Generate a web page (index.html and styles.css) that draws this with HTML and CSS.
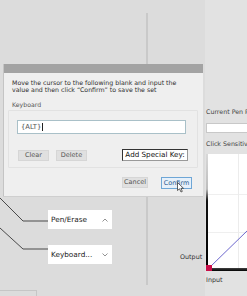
FILE: index.html
```html
<!DOCTYPE html>
<html>
<head>
<meta charset="utf-8">
<link rel="stylesheet" href="styles.css">
</head>
<body>
<div class="screen">
  <div class="canvas">
    <div class="divider"></div>
    <svg class="connectors" width="50" height="60" viewBox="0 0 50 60">
      <polyline points="0,2 23,25 48,25" />
      <polyline points="0,32 23,53 48,53" />
    </svg>
    <div class="select sel-pen"><span>Pen/Erase</span>
      <svg class="chev" width="6" height="4" viewBox="0 0 6 4"><polyline points="0.5,3.5 3,1 5.5,3.5"/></svg>
    </div>
    <div class="select sel-key"><span>Keyboard...</span>
      <svg class="chev" width="6" height="4" viewBox="0 0 6 4"><polyline points="0.5,0.5 3,3 5.5,0.5"/></svg>
    </div>
    <div class="tab-edge"></div>
    <span class="out-label">Output</span>
  </div>
  <aside class="panel">
    <div class="plabel">Current Pen P</div>
    <div class="pfield"></div>
    <div class="plabel">Click Sensitiv</div>
    <div class="graph">
      <div class="grid"></div>
      <svg class="curve" width="42" height="117" viewBox="0 0 42 117">
        <line x1="4" y1="113" x2="42" y2="76" />
      </svg>
      <div class="axis-y"></div>
      <div class="axis-x"></div>
      <div class="origin"></div>
    </div>
    <div class="in-label">Input</div>
  </aside>
</div>

<div class="dialog">
  <div class="titlebar"></div>
  <div class="dbody">
    <p class="msg">Move the cursor to the following blank and input the<br>value and then click “Confirm” to save the set</p>
    <div class="group-label">Keyboard</div>
    <div class="group">
      <div class="field"><span>{ALT}</span><i class="caret"></i></div>
      <div class="row">
        <button class="btn">Clear</button>
        <button class="btn">Delete</button>
        <div class="special">Add Special Key:</div>
      </div>
    </div>
    <div class="actions">
      <button class="btn act">Cancel</button>
      <button class="btn act primary">Confirm</button>
    </div>
  </div>
  <svg class="pointer" width="8" height="11" viewBox="0 0 8 11">
    <path d="M0.5,0.5 L0.5,8.5 L2.5,6.8 L4,10 L5.3,9.4 L3.9,6.3 L6.5,6.3 Z" />
  </svg>
</div>
</body>
</html>
```
FILE: styles.css
```css
* { box-sizing: border-box; }
html, body { margin: 0; padding: 0; }
body {
  width: 247px;
  height: 296px;
  overflow: hidden;
  background: #dcdcdc;
  font-family: "DejaVu Sans", Verdana, sans-serif;
  color: #333;
  position: relative;
}
.screen {
  display: flex;
  width: 247px;
  height: 296px;
}
.canvas {
  position: relative;
  width: 205px;
  flex: none;
}
.divider {
  position: absolute;
  left: 146px;
  top: 13px;
  width: 2px;
  height: 272px;
  background: #c9c9c9;
}
.connectors {
  position: absolute;
  left: 0;
  top: 196px;
}
.connectors polyline {
  fill: none;
  stroke: #4a4a4a;
  stroke-width: 1;
}
.select {
  position: absolute;
  left: 48px;
  width: 64px;
  height: 19px;
  background: #fff;
  display: flex;
  align-items: center;
  justify-content: space-between;
  padding: 0 4px 0 3px;
  font-size: 7.3px;
  color: #222;
}
.sel-pen { top: 210px; }
.sel-key { top: 245px; }
.chev polyline { fill: none; stroke: #777; stroke-width: 0.8; }
.tab-edge {
  position: absolute;
  left: 0;
  top: 290px;
  width: 37px;
  height: 8px;
  border-top: 1px solid #c6c6c6;
  border-right: 1px solid #c6c6c6;
}
.out-label {
  position: absolute;
  left: 180px;
  top: 253px;
  font-size: 6.4px;
  color: #333;
}
.panel {
  flex: 1;
  min-width: 0;
  background: #e2e2e2;
  padding-top: 107px;
  padding-left: 1px;
  display: flex;
  flex-direction: column;
  font-size: 6.3px;
  color: #444;
  white-space: nowrap;
}
.plabel { height: 9px; line-height: 9px; }
.pfield {
  height: 10px;
  margin: 7px 0 6px;
  background: #fff;
  border: 1px solid #c8c8c8;
  border-right: none;
  flex: none;
}
.graph {
  position: relative;
  margin-top: 6px;
  height: 117px;
  flex: none;
  background: #fff;
}
.grid {
  position: absolute;
  inset: 0;
  background-image:
    linear-gradient(to right, transparent 32px, #ececec 32px, #ececec 33px, transparent 33px),
    linear-gradient(to bottom, transparent 40px, #efefef 40px, #efefef 41px, transparent 41px, transparent 78px, #efefef 78px, #efefef 79px, transparent 79px);
}
.curve { position: absolute; left: 0; top: 0; }
.curve line { stroke: #5b55c8; stroke-width: 0.9; }
.axis-y {
  position: absolute;
  left: 0;
  top: 0;
  width: 2px;
  height: 117px;
  background: linear-gradient(to bottom, #d8d8d8 0%, #bdbdbd 30%, #111 40%, #000 100%);
}
.axis-x {
  position: absolute;
  left: 0;
  bottom: 0;
  width: 42px;
  height: 3px;
  background: linear-gradient(to bottom, #444, #000);
}
.origin {
  position: absolute;
  left: 0;
  bottom: 0;
  width: 6px;
  height: 6px;
  background: #c8104a;
}
.in-label {
  margin-top: 5px;
  font-size: 6.4px;
  color: #333;
}

/* dialog overlay */
.dialog {
  position: absolute;
  left: 3px;
  top: 64px;
  width: 200px;
  height: 132px;
  background: #efefef;
  border-left: 1px solid #c4c4c4;
  box-shadow: 0 1px 0 #cfcfcf;
  display: flex;
  flex-direction: column;
}
.titlebar {
  height: 9px;
  background: #a3a3a3;
  flex: none;
}
.dbody {
  flex: 1;
  padding: 6px 5px 0 4px;
  display: flex;
  flex-direction: column;
}
.msg {
  margin: 0 0 0 4px;
  font-size: 6.25px;
  line-height: 7px;
  color: #2e2e2e;
  white-space: nowrap;
}
.group-label {
  margin: 8px 0 0 4px;
  font-size: 6.2px;
  line-height: 8px;
  color: #555;
}
.group {
  margin-top: 1px;
  height: 58px;
  border: 1px solid #e2e2e2;
  border-radius: 1px;
  padding: 9px 4px 0 8px;
  display: flex;
  flex-direction: column;
}
.field {
  height: 14px;
  width: 169px;
  background: #fff;
  border: 1px solid #a9c0c8;
  display: flex;
  align-items: center;
  padding-left: 3px;
  font-size: 6.8px;
  color: #555;
}
.caret {
  display: inline-block;
  width: 1px;
  height: 8px;
  background: #222;
  margin-left: 0.5px;
}
.row {
  margin-top: 15px;
  display: flex;
  align-items: center;
  padding-left: 1px;
}
.btn {
  font-family: inherit;
  margin: 0;
  padding: 0;
  height: 11px;
  width: 31px;
  background: #e0e0e0;
  border: 1px solid #d6d6d6;
  font-size: 6.5px;
  color: #555;
  line-height: 9px;
}
.row .btn + .btn { margin-left: 7px; }
.special {
  margin-left: 35px;
  width: 66px;
  height: 12px;
  background: #fff;
  border: 1px solid #333;
  border-right-color: #999;
  border-bottom-color: #999;
  font-size: 7.2px;
  line-height: 10px;
  color: #111;
  text-align: center;
}
.actions {
  margin-top: 9px;
  display: flex;
  padding-left: 114px;
}
.act { width: 26px; height: 11px; }
.act.primary {
  margin-left: 13px;
  width: 31px;
  height: 12px;
  background: #e6f0fa;
  border: 1px solid #6ea6d6;
  color: #2c5d8f;
}
.pointer {
  position: absolute;
  left: 173px;
  top: 118px;
}
.pointer path { fill: #fff; stroke: #222; stroke-width: 0.7; }
```
